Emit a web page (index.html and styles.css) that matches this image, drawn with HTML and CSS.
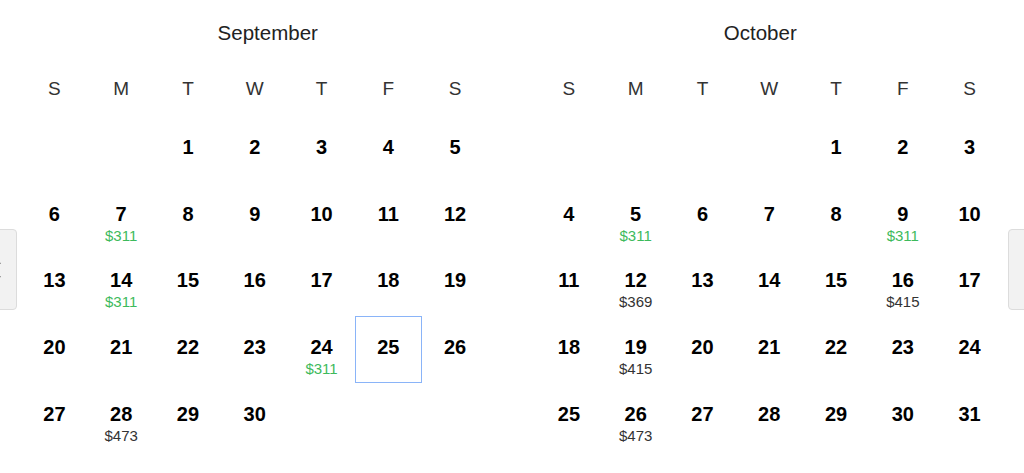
FILE: index.html
```html
<!DOCTYPE html>
<html>
<head>
    <title>Fare Calendar</title>
    <link rel="stylesheet" href="styles.css">
</head>
<body>
    <div class="calendar">

        <!-- September -->
        <div class="month">
            <div class="month-title month-title-left">September</div>
            <div class="weekdays">
                <span>S</span><span>M</span><span>T</span><span>W</span><span>T</span><span>F</span><span>S</span>
            </div>
            <div class="days">
                <div class="day"></div>
                <div class="day"></div>
                <div class="day"><b>1</b></div>
                <div class="day"><b>2</b></div>
                <div class="day"><b>3</b></div>
                <div class="day"><b>4</b></div>
                <div class="day"><b>5</b></div>

                <div class="day"><b>6</b></div>
                <div class="day"><b>7</b><span class="price low">$311</span></div>
                <div class="day"><b>8</b></div>
                <div class="day"><b>9</b></div>
                <div class="day"><b>10</b></div>
                <div class="day"><b>11</b></div>
                <div class="day"><b>12</b></div>

                <div class="day"><b>13</b></div>
                <div class="day"><b>14</b><span class="price low">$311</span></div>
                <div class="day"><b>15</b></div>
                <div class="day"><b>16</b></div>
                <div class="day"><b>17</b></div>
                <div class="day"><b>18</b></div>
                <div class="day"><b>19</b></div>

                <div class="day"><b>20</b></div>
                <div class="day"><b>21</b></div>
                <div class="day"><b>22</b></div>
                <div class="day"><b>23</b></div>
                <div class="day"><b>24</b><span class="price low">$311</span></div>
                <div class="day selected"><b>25</b></div>
                <div class="day"><b>26</b></div>

                <div class="day"><b>27</b></div>
                <div class="day"><b>28</b><span class="price">$473</span></div>
                <div class="day"><b>29</b></div>
                <div class="day"><b>30</b></div>
            </div>
        </div>

        <!-- October -->
        <div class="month">
            <div class="month-title month-title-right">October</div>
            <div class="weekdays">
                <span>S</span><span>M</span><span>T</span><span>W</span><span>T</span><span>F</span><span>S</span>
            </div>
            <div class="days">
                <div class="day"></div>
                <div class="day"></div>
                <div class="day"></div>
                <div class="day"></div>
                <div class="day"><b>1</b></div>
                <div class="day"><b>2</b></div>
                <div class="day"><b>3</b></div>

                <div class="day"><b>4</b></div>
                <div class="day"><b>5</b><span class="price low">$311</span></div>
                <div class="day"><b>6</b></div>
                <div class="day"><b>7</b></div>
                <div class="day"><b>8</b></div>
                <div class="day"><b>9</b><span class="price low">$311</span></div>
                <div class="day"><b>10</b></div>

                <div class="day"><b>11</b></div>
                <div class="day"><b>12</b><span class="price">$369</span></div>
                <div class="day"><b>13</b></div>
                <div class="day"><b>14</b></div>
                <div class="day"><b>15</b></div>
                <div class="day"><b>16</b><span class="price">$415</span></div>
                <div class="day"><b>17</b></div>

                <div class="day"><b>18</b></div>
                <div class="day"><b>19</b><span class="price">$415</span></div>
                <div class="day"><b>20</b></div>
                <div class="day"><b>21</b></div>
                <div class="day"><b>22</b></div>
                <div class="day"><b>23</b></div>
                <div class="day"><b>24</b></div>

                <div class="day"><b>25</b></div>
                <div class="day"><b>26</b><span class="price">$473</span></div>
                <div class="day"><b>27</b></div>
                <div class="day"><b>28</b></div>
                <div class="day"><b>29</b></div>
                <div class="day"><b>30</b></div>
                <div class="day"><b>31</b></div>
            </div>
        </div>

        <!-- paging buttons, half off screen -->
        <button class="nav nav-prev" aria-label="Previous month">
            <svg width="10" height="18" viewBox="0 0 10 18"><path d="M8 1.5 L1.5 9 L8 16.5" fill="none" stroke="#333" stroke-width="2"/></svg>
        </button>
        <button class="nav nav-next" aria-label="Next month">
            <svg width="10" height="18" viewBox="0 0 10 18"><path d="M2 1.5 L8.5 9 L2 16.5" fill="none" stroke="#333" stroke-width="2"/></svg>
        </button>

    </div>
</body>
</html>
```

FILE: styles.css
```css
body
{
    margin: 0;
    background: #fff;
    font-family: "Liberation Sans", Arial, sans-serif;
    color: #222;
    overflow: hidden;
}

.calendar
{
    position: relative;
    display: grid;
    grid-template-columns: 1fr 1fr;
    column-gap: 47px;
    padding: 0 21px;
    height: 473px;
}

.month-title
{
    padding-top: 21px;
    height: 24px;
    line-height: 24px;
    font-size: 20.5px;
    text-align: center;
    color: #222;
}

.month-title-left
{
    padding-left: 26px;
}

.month-title-right
{
    padding-right: 18px;
}

.weekdays
{
    display: grid;
    grid-template-columns: repeat(7, 1fr);
    margin-top: 32px;
    margin-bottom: 15px;
    height: 24px;
    line-height: 24px;
    font-size: 19px;
    text-align: center;
    color: #333;
}

.days
{
    display: grid;
    grid-template-columns: repeat(7, 1fr);
    grid-auto-rows: 66.7px;
}

.day
{
    display: flex;
    flex-direction: column;
    align-items: center;
    box-sizing: border-box;
    padding-top: 20px;
}

.day b
{
    font-size: 20px;
    line-height: 22px;
    color: #000;
}

.price
{
    margin-top: 3px;
    font-size: 15px;
    line-height: 16px;
    color: #333;
}

.price.low
{
    color: #3dba5c;
}

.day.selected
{
    border: 1px solid #8ab4f8;
    padding-top: 19px;
}

.nav
{
    position: absolute;
    top: 229px;
    width: 40px;
    height: 81px;
    padding: 0;
    display: flex;
    align-items: center;
    justify-content: center;
    background: #f2f2f2;
    border: 1px solid #dcdcdc;
    border-radius: 4px;
    cursor: pointer;
}

.nav-prev
{
    left: -23px;
}

.nav-next
{
    left: 1008px;
}
```
